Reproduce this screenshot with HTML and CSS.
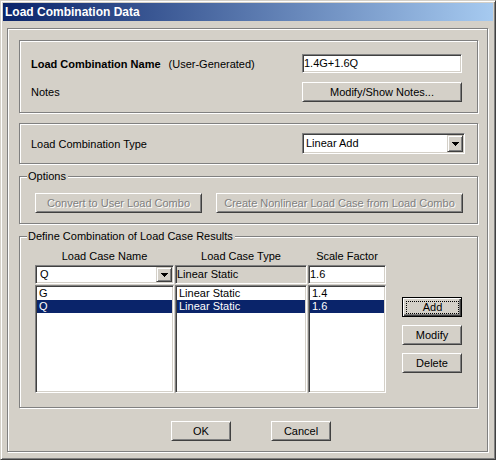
FILE: index.html
```html
<!DOCTYPE html>
<html>
<head>
<meta charset="utf-8">
<title>Load Combination Data</title>
<link rel="stylesheet" href="styles.css">
</head>
<body>
<div class="window">
  <div class="titlebar">Load Combination Data</div>
  <div class="frame">
    <div class="group g-name">
      <div class="row">
        <div class="label"><b>Load Combination Name</b><span class="sub">(User-Generated)</span></div>
        <div class="field name-field">1.4G+1.6Q</div>
      </div>
      <div class="row row2">
        <div class="label">Notes</div>
        <div class="btn notes-btn">Modify/Show Notes...</div>
      </div>
    </div>
    <div class="group g-type">
      <div class="row">
        <div class="label">Load Combination Type</div>
        <div class="field combo type-combo">
          <span class="combo-text">Linear Add</span>
          <span class="arrow-btn"><svg width="7" height="4" viewBox="0 0 7 4"><path d="M0 0h7v1H0zM1 1h5v1H1zM2 2h3v1H2zM3 3h1v1H3z" fill="#000"/></svg></span>
        </div>
      </div>
    </div>
    <div class="group g-options">
      <div class="legend">Options</div>
      <div class="opt-row">
        <div class="btn disabled convert">Convert to User Load Combo</div>
        <div class="btn disabled create">Create Nonlinear Load Case from Load Combo</div>
      </div>
    </div>
    <div class="group g-define">
      <div class="legend">Define Combination of Load Case Results</div>
      <div class="define-body">
        <div class="cases">
          <div class="hdr">Load Case Name</div>
          <div class="hdr">Load Case Type</div>
          <div class="hdr">Scale Factor</div>
          <div class="field combo case-combo">
            <span class="combo-text">Q</span>
            <span class="arrow-btn"><svg width="7" height="4" viewBox="0 0 7 4"><path d="M0 0h7v1H0zM1 1h5v1H1zM2 2h3v1H2zM3 3h1v1H3z" fill="#000"/></svg></span>
          </div>
          <div class="field ctl readonly">Linear Static</div>
          <div class="field ctl">1.6</div>
          <div class="field list">
            <div class="item">G</div>
            <div class="item sel">Q</div>
          </div>
          <div class="field list">
            <div class="item">Linear Static</div>
            <div class="item sel">Linear Static</div>
          </div>
          <div class="field list">
            <div class="item">1.4</div>
            <div class="item sel">1.6</div>
          </div>
        </div>
        <div class="side-btns">
          <div class="btn default"><span class="focus">Add</span></div>
          <div class="btn">Modify</div>
          <div class="btn">Delete</div>
        </div>
      </div>
    </div>
    <div class="dialog-btns">
      <div class="btn">OK</div>
      <div class="btn">Cancel</div>
    </div>
  </div>
</div>
</body>
</html>
```
FILE: styles.css
```css
* { box-sizing: border-box; }
html, body { margin: 0; padding: 0; }
body {
  background: #d4d0c8;
  font-family: "Liberation Sans", Arial, sans-serif;
  font-size: 11px;
  color: #000;
}
.window {
  width: 496px;
  height: 460px;
  border: 1px solid;
  border-color: #d4d0c8 #404040 #404040 #d4d0c8;
  box-shadow: inset 1px 1px #fff, inset -1px -1px #808080;
  padding: 2px;
  background: #d4d0c8;
}
.titlebar {
  height: 18px;
  line-height: 18px;
  padding-left: 2px;
  color: #fff;
  font-weight: bold;
  font-size: 12px;
  background: linear-gradient(to right, #0a246a, #a6caf0);
}
.frame {
  margin: 7px 5px 0 4px;
  border: 1px solid #808080;
  box-shadow: inset 1px 1px #fff, 1px 1px #fff;
  padding: 11px 9px 10px 11px;
}
.group {
  border: 1px solid #808080;
  box-shadow: inset 1px 1px #fff, 1px 1px #fff;
}
.g-name { margin-bottom: 10px; padding: 13px 15px 10px 11px; }
.g-type { margin-bottom: 12px; padding: 9px 12px 9px 11px; }
.g-options { margin-bottom: 12px; padding: 0 0 10px 0; }
.g-define { padding: 0 0 14px 0; }
.row {
  display: flex;
  align-items: center;
  justify-content: space-between;
}
.row2 { margin-top: 9px; }
.sub { margin-left: 8px; }
.field {
  border: 1px solid;
  border-color: #808080 #fff #fff #808080;
  box-shadow: inset 1px 1px #404040, inset -1px -1px #d4d0c8;
  background: #fff;
  white-space: nowrap;
}
.name-field {
  width: 160px;
  height: 19px;
  line-height: 17px;
  padding-left: 1px;
}
.btn {
  height: 20px;
  line-height: 18px;
  text-align: center;
  border: 1px solid;
  border-color: #fff #404040 #404040 #fff;
  box-shadow: inset 1px 1px #d4d0c8, inset -1px -1px #808080;
  background: #d4d0c8;
  white-space: nowrap;
}
.btn.disabled {
  color: #808080;
  text-shadow: 1px 1px 0 #fff;
}
.btn.default {
  border-color: #000;
  box-shadow: inset 1px 1px #fff, inset -1px -1px #404040, inset -2px -2px #808080;
}
.focus {
  display: block;
  margin: 3px 2px 2px 3px;
  border: 1px dotted #000;
  line-height: 11px;
  height: 13px;
}
.notes-btn { width: 160px; }
.combo {
  display: flex;
  padding: 1px;
}
.type-combo { width: 163px; height: 21px; }
.type-combo .combo-text { line-height: 17px; padding-left: 2px; }
.case-combo { height: 19px; }
.case-combo .combo-text { line-height: 15px; padding-left: 3px; }
.combo-text { flex: 1; }
.arrow-btn {
  width: 16px;
  display: flex;
  align-items: center;
  justify-content: center;
  border: 1px solid;
  border-color: #d4d0c8 #404040 #404040 #d4d0c8;
  box-shadow: inset 1px 1px #fff, inset -1px -1px #808080;
  background: #d4d0c8;
}
.arrow-btn svg { display: block; }
.legend {
  display: table;
  margin: -7px 0 0 7px;
  padding: 0 2px 0 1px;
  line-height: 13px;
  background: #d4d0c8;
}
.opt-row {
  display: flex;
  gap: 14px;
  margin: 10px 0 0 15px;
}
.convert { width: 167px; }
.create { width: 247px; }
.define-body {
  display: flex;
  align-items: flex-start;
  margin: 7px 0 0 15px;
}
.cases {
  display: grid;
  grid-template-columns: 139px 132px 78px;
  column-gap: 1px;
}
.hdr {
  text-align: center;
  line-height: 13px;
  margin-bottom: 2px;
}
.case-combo, .ctl { margin-bottom: 1px; }
.ctl {
  height: 19px;
  line-height: 17px;
  padding-left: 1px;
}
.readonly { background: #d4d0c8; }
.list {
  height: 108px;
  padding: 1px;
}
.item {
  line-height: 13px;
  padding-left: 2px;
}
.item.sel {
  background: #0a246a;
  color: #fff;
}
.side-btns {
  display: flex;
  flex-direction: column;
  gap: 8px;
  margin: 47px 0 0 16px;
}
.side-btns .btn { width: 60px; }
.dialog-btns {
  display: flex;
  gap: 40px;
  margin: 13px 0 0 152px;
}
.dialog-btns .btn { width: 60px; }
```
